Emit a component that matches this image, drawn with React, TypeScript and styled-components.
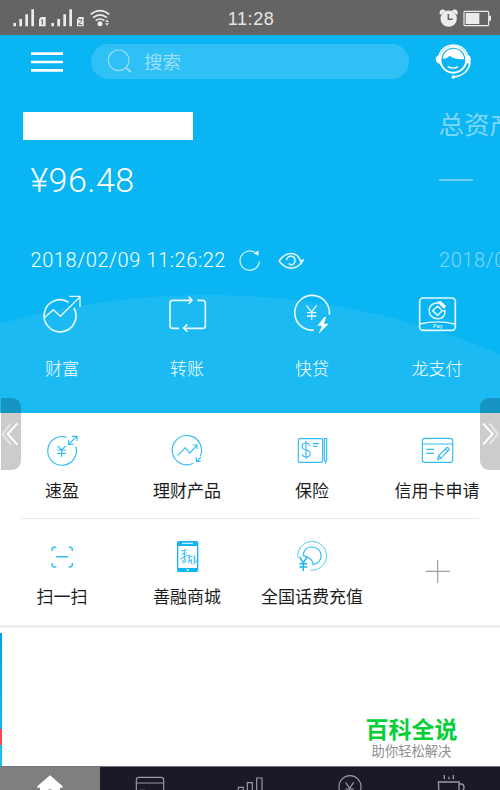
import React from "react";
import styled, { createGlobalStyle } from "styled-components";

const GlobalStyle = createGlobalStyle`
  * { box-sizing: border-box; }
  html, body { margin: 0; padding: 0; }
  body {
    width: 500px;
    height: 790px;
    overflow: hidden;
    background: #fff;
    font-family: "Roboto", "Noto Sans CJK SC", sans-serif;
  }
  svg { display: block; flex: none; }
`;

const Screen = styled.div`
  position: relative;
  display: flex;
  flex-direction: column;
  width: 500px;
  height: 790px;
  overflow: hidden;
`;

const StatusBar = styled.header`
  display: grid;
  grid-template-columns: 1fr auto 1fr;
  align-items: center;
  height: 35px;
  padding: 0 8px 0 12px;
  background: #646464;
  color: #e6e6e6;
  font: 400 18px/22px "Liberation Sans", sans-serif;
`;

const Clock = styled.time`
  padding: 2px 2px 0 0;
  letter-spacing: 0.6px;
`;

const StatusIcons = styled.div<{ $end?: boolean }>`
  display: flex;
  justify-content: ${(p) => (p.$end ? "flex-end" : "flex-start")};
  padding-top: ${(p) => (p.$end ? 0 : 1)}px;
`;

const Hero = styled.section`
  display: flex;
  flex-direction: column;
  height: 377.5px;
  background: radial-gradient(circle at 207px 1012px, #1cbaf3 751.5px, #0ab5f3 752.5px);
  color: #fff;
`;

const TopBar = styled.div`
  display: flex;
  align-items: center;
  height: 53px;
  padding-left: 31px;
`;

const SearchBox = styled.div`
  display: flex;
  align-items: center;
  gap: 12px;
  width: 318px;
  height: 35px;
  margin: 0 25.5px 0 28px;
  padding: 0 0 0 16px;
  border-radius: 18px;
  background: #2fc1f5;
  color: #9adff9;
  font-size: 18.5px;
  line-height: 24px;
`;

const SearchHint = styled.span`
  padding-top: 3px;
`;

const Accounts = styled.div`
  display: flex;
  height: 196px;
  overflow: hidden;
`;

const Account = styled.div<{ $faded?: boolean }>`
  display: flex;
  flex: none;
  flex-direction: column;
  width: ${(p) => (p.$faded ? "160px" : "408.5px")};
  padding-left: 30px;
  color: ${(p) => (p.$faded ? "#80d6f8" : "#fff")};
  white-space: nowrap;
`;

const AccountName = styled.div`
  height: 28px;
  margin-top: 24px;
  font-size: 25.5px;
  font-weight: 400;
  line-height: 26px;
`;

const MaskedName = styled.div`
  width: 170px;
  height: 28px;
  margin: 24px 0 0 -7px;
  background: #fff;
`;

const Amount = styled.div`
  height: 40px;
  margin-top: 20px;
  padding-left: 0.5px;
  font: 300 34px/40px "Roboto", sans-serif;
  letter-spacing: 0.5px;
`;

const EmptyAmount = styled.div`
  width: 34px;
  height: 2px;
  margin: 39px 0 19px;
  background: #6ad0f7;
`;

const Updated = styled.div`
  display: flex;
  align-items: center;
  gap: 8px;
  height: 30px;
  margin-top: 45px;
  padding-left: 0.5px;
  font: 350 20px/30px "Roboto", sans-serif;
  letter-spacing: 0.58px;
`;

const Row = styled.div<{ $top: number }>`
  display: grid;
  grid-template-columns: repeat(4, 125px);
  margin-left: -0.5px;
  padding-top: ${(p) => p.$top}px;
`;

const Shortcut = styled.div<{ $gap: number; $light?: boolean }>`
  display: flex;
  flex-direction: column;
  align-items: center;
  gap: ${(p) => p.$gap}px;
  color: ${(p) => (p.$light ? "#fff" : "#1c1c1c")};
  font-size: 17px;
  font-weight: ${(p) => (p.$light ? 300 : 400)};
  line-height: 24px;
`;

const Tile = styled.svg<{ $size: number }>`
  width: ${(p) => p.$size}px;
  height: ${(p) => p.$size}px;
  overflow: visible;
  fill: none;
  stroke: ${(p) => (p.$size > 40 ? "#e6f7fe" : "#35bdf4")};
  stroke-width: ${(p) => (p.$size > 40 ? 5 : 3.5)};
`;

const Services = styled.section`
  display: flex;
  flex-direction: column;
  height: 212px;
  background: #fff;
`;

const Divider = styled.hr`
  width: 458px;
  height: 1px;
  margin: 14.5px 0 0 21px;
  border: 0;
  background: #e9e9e9;
`;

const Promo = styled.section`
  display: flex;
  flex: 1;
  border-top: 3px solid #eee;
`;

const PromoEdge = styled.div`
  width: 2px;
  margin-top: 5.5px;
  background: linear-gradient(#0a9fe8 0, #13b4f5 96px, #f9494e 96px, #f9494e 112px, #1bbdf8 112px);
`;

const PromoBody = styled.div`
  display: flex;
  flex: 1;
  justify-content: flex-end;
  align-items: flex-end;
  padding: 0 42.5px 5px 0;
`;

const Brand = styled.div`
  display: flex;
  flex-direction: column;
  align-items: center;
`;

const BrandName = styled.strong`
  color: #04cf38;
  font-size: 23px;
  font-weight: 700;
  line-height: 24px;
`;

const Slogan = styled.span`
  color: #8e8e8e;
  font-size: 13.3px;
  line-height: 18px;
`;

const TabBar = styled.nav`
  display: grid;
  grid-template-columns: repeat(5, 100px);
  height: 24px;
  border-top: 1px solid #77767c;
  background: #1b1927;
`;

const Tab = styled.div<{ $active?: boolean }>`
  display: flex;
  justify-content: center;
  height: 23px;
  padding-top: 5px;
  overflow: hidden;
  background: ${(p) => (p.$active ? "#7f7f7f" : "#1b1927")};
`;

const TabIcon = styled.svg`
  width: 36px;
  height: 36px;
  fill: none;
  stroke: #9b9aa0;
  stroke-width: 3.5;
`;

const Handle = styled.div<{ $right?: boolean }>`
  position: absolute;
  top: 398px;
  ${(p) => (p.$right ? "right: 0.5px" : "left: 1px")};
  width: 19.5px;
  height: 71.5px;
  border-radius: ${(p) => (p.$right ? "9px 0 0 9px" : "0 9px 9px 0")};
  background: rgba(0, 0, 0, 0.2);
`;

const Chevrons = ({ flip }: { flip?: boolean }) => (
  <svg width="20" height="72" viewBox="3 9 60 216" fill="none" stroke="#fff" strokeWidth="6">
    <g transform={flip ? "translate(64 0) scale(-1 1)" : undefined}>
      <path d="M33 85 7 117l26 32" opacity=".5" />
      <path d="M52 85 23 117l29 32" />
    </g>
  </svg>
);

const Signal = () => (
  <svg width="100" height="22" viewBox="36 18 300 66" fill="#ececec">
    {[0, 114].map((x) => (
      <g key={x} transform={`translate(${x} 0)`}>
        <path d="M40 66h8v10h-8zM58 54h8v22h-8zM76 40h8v36h-8zM94 25h8v51h-8z" />
        <path d="M117 55l6-7h14v28h-20z" />
        {x === 0 ? (
          <path d="M123 57h4v14" fill="none" stroke="#646464" strokeWidth="3.5" />
        ) : (
          <path d="M121 56h10v4l-9 8v3h11" fill="none" stroke="#646464" strokeWidth="3" />
        )}
      </g>
    ))}
    <g fill="none" stroke="#ececec" strokeWidth="5">
      <path d="M272 40q28-22 56 0M279 50q21-17 42 0M287 59q13-10 26 0" />
    </g>
    <circle cx="300" cy="68" r="7.5" />
    <path d="M316 63l5-7 6 7zM316 67l5 7 6-7z" />
  </svg>
);

const Power = () => (
  <svg width="54" height="22" viewBox="566 18 162 66" fill="#ececec">
    <circle cx="598" cy="53" r="24.5" />
    <path d="M571 40q-2-16 13-14 4 1 5 3L574 41zM625 40q2-16-13-14-4 1-5 3l15 12z" />
    <path d="M597 39v16h13" fill="none" stroke="#646464" strokeWidth="4.5" />
    <rect x="644" y="31" width="74" height="43" rx="3" fill="none" stroke="#ececec" strokeWidth="3.5" />
    <path d="M649 36h41v33h-41zM719 44h6v15h-6z" />
  </svg>
);

const Agent = () => (
  <svg width="36" height="36" viewBox="553 131 108 108" fill="none" stroke="#fff" strokeWidth="5">
    <path d="M565 163c8-18 24-29 43-29s35 11 43 29" strokeWidth="4" />
    <circle cx="608" cy="178" r="39" strokeWidth="6" />
    <path d="M576 175c2-19 17-30 33-30s29 11 32 31c-16 2-33-1-44-10-5 5-12 9-21 9z" fill="#fff" stroke="none" />
    <path d="M568 163c-17 1-17 26 0 27zM648 163c17 1 17 26 0 27z" fill="#fff" stroke="none" />
    <path d="M591 199q17 9 31 0" strokeWidth="4" />
    <path d="M658 185c-3 26-22 43-50 45" />
    <circle cx="608" cy="230" r="5.5" fill="#fff" stroke="none" />
  </svg>
);

const YEN = "M-12-19 0-1 12-19M0-1v24M-13 1h26M-13 11h26";

const App = () => (
  <Screen>
    <GlobalStyle />
    <StatusBar>
      <StatusIcons><Signal /></StatusIcons>
      <Clock>11:28</Clock>
      <StatusIcons $end><Power /></StatusIcons>
    </StatusBar>

    <Hero>
      <TopBar>
        <svg width="32" height="22" viewBox="93 152 96 66" stroke="#fff" strokeWidth="8">
          <path d="M93 160h96M93 185h96M93 210h96" />
        </svg>
        <SearchBox>
          <svg width="25" height="25" viewBox="321 148 75 75" fill="none" stroke="#92ddf9" strokeWidth="3.5">
            <circle cx="356" cy="182" r="31" />
            <path d="m377 203 15 14" strokeWidth="6" />
          </svg>
          <SearchHint>搜索</SearchHint>
        </SearchBox>
        <Agent />
      </TopBar>

      <Accounts>
        <Account>
          <MaskedName />
          <Amount>¥96.48</Amount>
          <Updated>
            2018/02/09 11:26:22
            <svg width="73" height="24" viewBox="701 438 219 72" fill="none" stroke="#d8f3fd">
              <path d="M777 478a29 29 0 1 1-14-27" strokeWidth="3.5" />
              <path d="m760 454 14-8v14z" fill="#fff" />
              <path d="M836 477c22-30 54-30 65 1l9-5M836 477c23 30 57 28 74-5" strokeWidth="5" />
              <path d="M859 475c0-17 25-15 25 0s-16 17-19 9" strokeWidth="4.5" />
            </svg>
          </Updated>
        </Account>
        <Account $faded>
          <AccountName>总资产</AccountName>
          <EmptyAmount />
          <Updated>2018/02/09</Updated>
        </Account>
      </Accounts>

      <Row $top={8}>
        <Shortcut $gap={20.5} $light>
          <Tile $size={44} viewBox="120 36 132 132">
            <path d="M206 67a48 48 0 1 0 16 17" />
            <path d="m135 112 25-23 21 20 58-57M208 49h32v32" strokeWidth="4" />
          </Tile>
          财富
        </Shortcut>
        <Shortcut $gap={20.5} $light>
          <Tile $size={44} viewBox="495 36 132 132">
            <path d="M537 145h-19q-8 0-8-8V69q0-8 8-8h55M592 61h16q8 0 8 8v68q0 8-8 8h-55" />
            <path d="m566 50 10 11-10 11M562 133l-11 11 11 11" />
          </Tile>
          转账
        </Shortcut>
        <Shortcut $gap={20.5} $light>
          <Tile $size={44} viewBox="120 36 132 132">
            <path d="M192 150a52 52 0 1 1 46-46" />
            <path d="m169 76 16 20 15-20M185 96v24M171 98h28M171 108h28" strokeWidth="4" />
            <path d="m223 111-21 26h14l-10 24 30-30h-14l6-20z" fill="#fff" stroke="none" />
          </Tile>
          快贷
        </Shortcut>
        <Shortcut $gap={20.5} $light>
          <Tile $size={44} viewBox="495 36 132 132">
            <rect x="509" y="54" width="107" height="97" rx="10" />
            <path d="M510 132q52-13 105 0" strokeWidth="4" />
            <path d="M566 69c-37-4-38 47-3 47 17 0 23-12 22-24h-12M563 78l-15 14 15 14 12-12M562 78l12 11" strokeWidth="4.5" />
            <path d="m561 65 11-2 16 15-6 9z" fill="#fff" stroke="none" />
            <text x="563" y="143" textAnchor="middle" fill="#fff" stroke="none" fontSize="17" fontFamily="Liberation Sans, sans-serif">Pay</text>
          </Tile>
          龙支付
        </Shortcut>
      </Row>
    </Hero>

    <Services>
      <Row $top={19.5}>
        <Shortcut $gap={11}>
          <Tile $size={36} viewBox="132 111 108 108">
            <path d="M200 127a43 43 0 1 0 27 27" />
            <path d="m173 153 12 12 12-12M185 164v22M172 165h26M172 175h26" />
            <path d="m207 147 23-23M216 124h15v14M206 134v14h14" />
          </Tile>
          速盈
        </Shortcut>
        <Shortcut $gap={11}>
          <Tile $size={36} viewBox="507 111 108 108">
            <path d="M580 205a44 44 0 1 1 21-22" />
            <path d="m533 182 23-24 13 16 22-23M578 150h13v12M603 186l-13 13M589 187v12h13" />
          </Tile>
          理财产品
        </Shortcut>
        <Shortcut $gap={11}>
          <Tile $size={36} viewBox="132 111 108 108">
            <rect x="145" y="131" width="73" height="71" rx="3" />
            <path d="M223 131h7v63l-3 9-4-9z" />
            <path d="M179 152q-2-8-11-8c-15 0-16 18 0 21 18 3 15 21 0 21q-10 0-11-9M168 138v54M189 146h19M189 154h13" />
          </Tile>
          保险
        </Shortcut>
        <Shortcut $gap={11}>
          <Tile $size={36} viewBox="507 111 108 108">
            <rect x="517" y="130" width="91" height="72" rx="7" />
            <path d="M517 147h91M529 163h23M529 175h23" />
            <path d="m563 194 3-12 25-25q5 0 7 7l-26 26zM566 182l7 8M586 162l7 7" />
          </Tile>
          信用卡申请
        </Shortcut>
      </Row>
      <Divider />
      <Row $top={19.5}>
        <Shortcut $gap={11}>
          <Tile $size={36} viewBox="132 84 108 108">
            <path d="M156 123v-3q0-8 8-8h5M206 112h4q7 0 7 8v3M156 159v4q0 8 8 8h5M206 171h4q7 0 7-8v-4M168 140h36" strokeWidth="4.5" />
          </Tile>
          扫一扫
        </Shortcut>
        <Shortcut $gap={11}>
          <Tile $size={36} viewBox="507 84 108 108">
            <path fillRule="evenodd" stroke="none" fill="#12b5f3" d="M537 93h52q6 0 6 6v81q0 6-6 6h-52q-6 0-6-6V99q0-6 6-6zm-2 15v66h56v-66z" />
            <path d="M546 100h33" stroke="#d8f4fe" />
            <circle cx="563" cy="180" r="3" fill="#fff" stroke="none" />
            <path d="m544 123 16-4M553 119v28M545 132l15-3M540 148l20-11 11-2M545 155l11-7v8l-9 3M565 143l13-6M569 139l-3 19 8-10v14M580 145l7-4M583 137v23l-5 3M588 148v12" strokeWidth="3" />
          </Tile>
          善融商城
        </Shortcut>
        <Shortcut $gap={11}>
          <Tile $size={36} viewBox="132 84 108 108">
            <path d="M144 144a43 43 0 1 1 37 36" strokeWidth="2.5" />
            <path d="M160 137q0-25 26-26c36 1 36 49 3 53q0-12-11-19t-18-8z" />
            <path d={YEN} transform="translate(160 160) scale(.9 1)" strokeWidth="4.5" stroke="#12b5f3" />
          </Tile>
          全国话费充值
        </Shortcut>
        <Shortcut $gap={11}>
          <svg width="36" height="66" viewBox="507 84 108 198" stroke="#9d9d9d" strokeWidth="3.5">
            <path d="M528 184h71M563 149v71" />
          </svg>
        </Shortcut>
      </Row>
    </Services>

    <Promo>
      <PromoEdge />
      <PromoBody>
        <Brand>
          <BrandName>百科全说</BrandName>
          <Slogan>助你轻松解决</Slogan>
        </Brand>
      </PromoBody>
    </Promo>

    <TabBar>
      <Tab $active>
        <TabIcon viewBox="96 456 108 108">
          <path d="m150 466-38 33v4h8v40h60v-40h8v-4z" fill="#fff" stroke="none" />
          <path d="M143 512q7-5 14 0" stroke="#7f7f7f" />
        </TabIcon>
      </Tab>
      <Tab>
        <TabIcon viewBox="396 456 108 108">
          <rect x="409" y="472" width="82" height="70" rx="8" />
          <path d="M409 489h82M420 511h14" />
        </TabIcon>
      </Tab>
      <Tab>
        <TabIcon viewBox="696 456 108 108">
          <path d="M715 550v-48h15v48M742 550v-62h15v62M770 550v-76h16v76" />
        </TabIcon>
      </Tab>
      <Tab>
        <TabIcon viewBox="246 216 108 108">
          <circle cx="300" cy="260" r="33" />
          <path d={YEN} transform="translate(299 266)" />
        </TabIcon>
      </Tab>
      <Tab>
        <TabIcon viewBox="546 216 108 108">
          <path d="M565 246h62v30q0 20-20 20h-20q-20 0-20-20zM627 252h6q9 0 9 10t-9 11h-6M583 225v13M597 230v8M610 225v13" strokeWidth="4" />
        </TabIcon>
      </Tab>
    </TabBar>

    <Handle><Chevrons /></Handle>
    <Handle $right><Chevrons flip /></Handle>
  </Screen>
);

export default App;
